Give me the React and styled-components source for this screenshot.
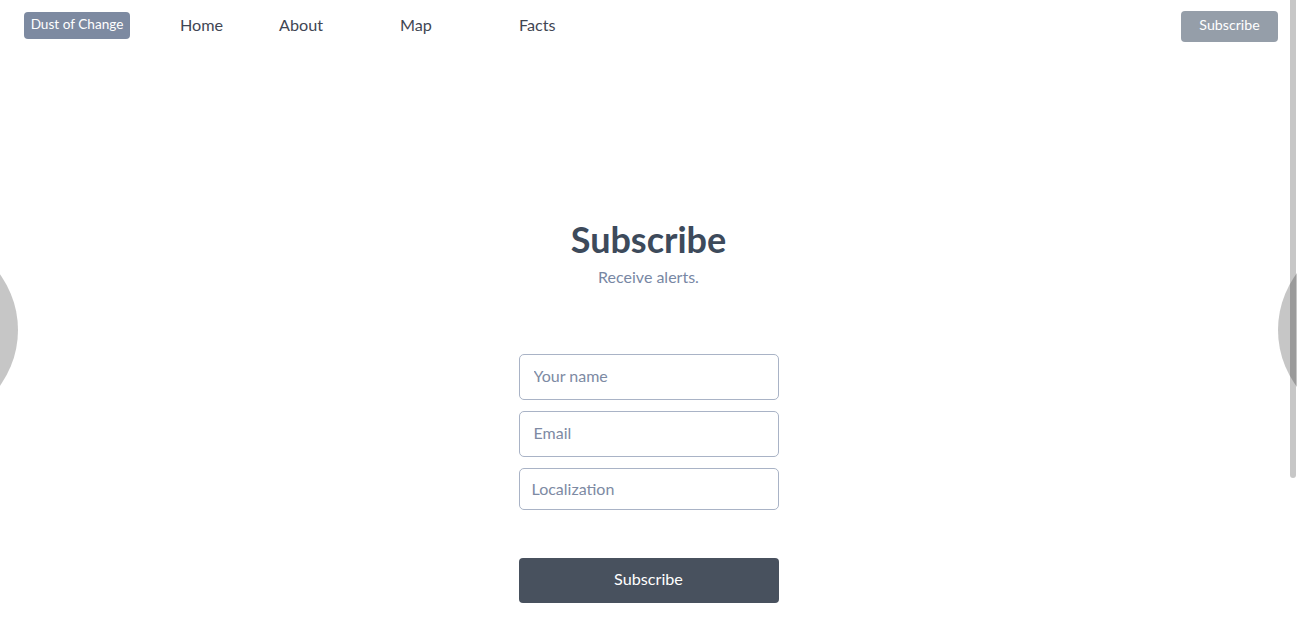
import React from "react";
import styled, { createGlobalStyle } from "styled-components";

const GlobalStyle = createGlobalStyle`
  html, body {
    margin: 0;
    padding: 0;
    background: #ffffff;
    overflow: hidden;
  }
  body {
    font-family: Lato, "Noto Sans", "Liberation Sans", sans-serif;
  }
  * { box-sizing: border-box; }
`;

const Page = styled.div`
  position: relative;
  width: 100%;
  height: 630px;
  overflow: hidden;
`;

const Nav = styled.nav`
  display: flex;
  align-items: center;
  height: 52px;
  padding: 0 19px 0 24px;
`;

const Brand = styled.a`
  display: inline-flex;
  align-items: center;
  justify-content: center;
  width: 106px;
  height: 27px;
  padding-bottom: 3px;
  background: #7d8aa1;
  color: #ffffff;
  font-size: 13.6px;
  border-radius: 4px;
  margin-top: -1px;
`;

const NavLinks = styled.div`
  display: flex;
  align-items: center;
  margin-left: 50px;
  margin-top: -3px;
`;

const NavLink = styled.a`
  display: block;
  width: ${(p) => p.$w}px;
  font-size: 16.2px;
  color: #3f4653;
  text-decoration: none;
`;

const Spacer = styled.div`
  flex: 1;
`;

const NavButton = styled.button`
  height: 31px;
  width: 97px;
  border: none;
  border-radius: 4px;
  background: #959ea9;
  color: #ffffff;
  font-family: inherit;
  font-size: 14.2px;
  padding: 0 0 3px;
`;

const Main = styled.main`
  display: flex;
  flex-direction: column;
  align-items: center;
  padding-top: 165px;
`;

const Title = styled.h1`
  margin: 0;
  font-size: 36px;
  line-height: 44px;
  font-weight: 700;
  color: #3d4a5b;
`;

const Subtitle = styled.p`
  margin: 6px 0 0;
  font-size: 16px;
  line-height: 20px;
  color: #7887a4;
`;

const Form = styled.form`
  display: flex;
  flex-direction: column;
  width: 260px;
  margin-top: 67px;
  gap: 11px;
`;

const Field = styled.input`
  width: 100%;
  height: ${(p) => p.$h}px;
  border: 1px solid #a9b3c6;
  border-radius: 5px;
  padding: 0 ${(p) => p.$pad}px ${(p) => p.$lift}px;
  font-family: inherit;
  font-size: 16px;
  color: #3e4a5a;
  background: #ffffff;
  outline: none;
  &::placeholder {
    color: #7d8aa3;
  }
`;

const Submit = styled.button`
  margin-top: 37px;
  height: 45px;
  width: 100%;
  border: none;
  border-radius: 4px;
  background: #48515e;
  color: #ffffff;
  font-family: inherit;
  font-size: 16.2px;
  padding: 0 0 4px;
`;

const Circle = styled.div`
  position: absolute;
  top: 235px;
  width: 190px;
  height: 190px;
  border-radius: 50%;
  background: #c6c6c6;
  ${(p) => (p.$side === "left" ? "left: -172px;" : "left: 1278px;")}
`;

const ScrollThumb = styled.div`
  position: fixed;
  top: 0;
  left: 1290px;
  width: 6px;
  height: 478px;
  border-radius: 0 0 3px 3px;
  background: rgba(0, 0, 0, 0.22);
`;

export default function App() {
  return (
    <>
      <GlobalStyle />
      <Page>
        <Nav>
          <Brand>Dust of Change</Brand>
          <NavLinks>
            <NavLink $w={99}>Home</NavLink>
            <NavLink $w={121}>About</NavLink>
            <NavLink $w={119}>Map</NavLink>
            <NavLink $w={60}>Facts</NavLink>
          </NavLinks>
          <Spacer />
          <NavButton>Subscribe</NavButton>
        </Nav>
        <Main>
          <Title>Subscribe</Title>
          <Subtitle>Receive alerts.</Subtitle>
          <Form onSubmit={(e) => e.preventDefault()}>
            <Field $h={46} $pad={14} $lift={4} placeholder="Your name" />
            <Field $h={46} $pad={14} $lift={4} placeholder="Email" />
            <Field $h={42} $pad={12} $lift={2} placeholder="Localization" />
            <Submit type="submit">Subscribe</Submit>
          </Form>
        </Main>
        <Circle $side="left" />
        <Circle $side="right" />
        <ScrollThumb />
      </Page>
    </>
  );
}
